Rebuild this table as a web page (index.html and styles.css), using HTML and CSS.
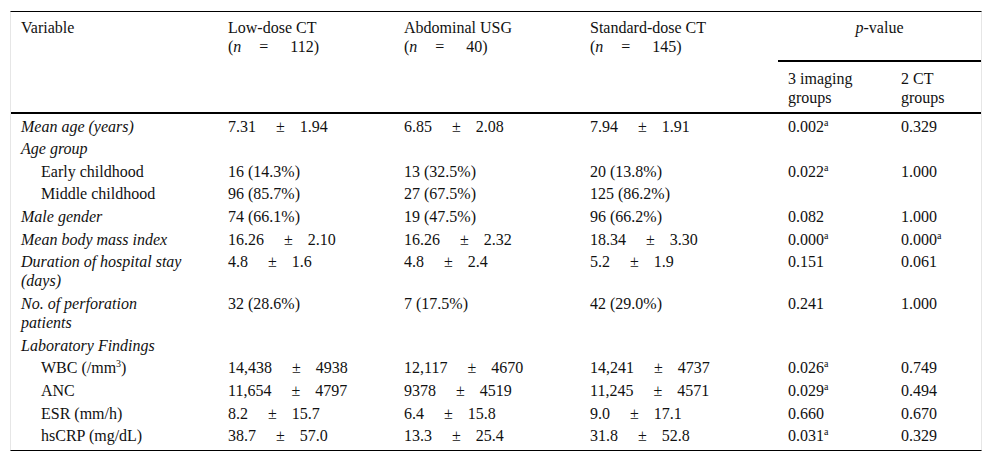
FILE: index.html
```html
<!DOCTYPE html>
<html lang="en">
<head>
<meta charset="utf-8">
<title>Table</title>
<link rel="stylesheet" href="styles.css">
</head>
<body>
<table class="tbl">
  <colgroup>
    <col class="c1"><col class="c2"><col class="c3"><col class="c4"><col class="c5"><col class="c6">
  </colgroup>
  <thead>
    <tr class="h1">
      <th rowspan="2" class="hb">Variable</th>
      <th rowspan="2" class="hb">Low-dose CT<br>(<i>n</i><span class="eq">=</span>112)</th>
      <th rowspan="2" class="hb">Abdominal USG<br>(<i>n</i><span class="eq">=</span>40)</th>
      <th rowspan="2" class="hb">Standard-dose CT<br>(<i>n</i><span class="eq">=</span>145)</th>
      <th colspan="2" class="pv"><i>p</i>-value</th>
    </tr>
    <tr class="h2">
      <th class="hb sub">3 imaging groups</th>
      <th class="hb sub">2 CT groups</th>
    </tr>
  </thead>
  <tbody>
    <tr><td><i>Mean age (years)</i></td><td>7.31<span class="pm">±</span>1.94</td><td>6.85<span class="pm">±</span>2.08</td><td>7.94<span class="pm">±</span>1.91</td><td>0.002<span class="sup">a</span></td><td>0.329</td></tr>
    <tr><td><i>Age group</i></td><td></td><td></td><td></td><td></td><td></td></tr>
    <tr><td class="ind">Early childhood</td><td>16 (14.3%)</td><td>13 (32.5%)</td><td>20 (13.8%)</td><td>0.022<span class="sup">a</span></td><td>1.000</td></tr>
    <tr><td class="ind">Middle childhood</td><td>96 (85.7%)</td><td>27 (67.5%)</td><td>125 (86.2%)</td><td></td><td></td></tr>
    <tr><td><i>Male gender</i></td><td>74 (66.1%)</td><td>19 (47.5%)</td><td>96 (66.2%)</td><td>0.082</td><td>1.000</td></tr>
    <tr><td><i>Mean body mass index</i></td><td>16.26<span class="pm">±</span>2.10</td><td>16.26<span class="pm">±</span>2.32</td><td>18.34<span class="pm">±</span>3.30</td><td>0.000<span class="sup">a</span></td><td>0.000<span class="sup">a</span></td></tr>
    <tr><td><i>Duration of hospital stay (days)</i></td><td>4.8<span class="pm">±</span>1.6</td><td>4.8<span class="pm">±</span>2.4</td><td>5.2<span class="pm">±</span>1.9</td><td>0.151</td><td>0.061</td></tr>
    <tr><td><i>No. of perforation<br>patients</i></td><td>32 (28.6%)</td><td>7 (17.5%)</td><td>42 (29.0%)</td><td>0.241</td><td>1.000</td></tr>
    <tr><td><i>Laboratory Findings</i></td><td></td><td></td><td></td><td></td><td></td></tr>
    <tr><td class="ind">WBC (/mm<span class="sup">3</span>)</td><td>14,438<span class="pm">±</span>4938</td><td>12,117<span class="pm">±</span>4670</td><td>14,241<span class="pm">±</span>4737</td><td>0.026<span class="sup">a</span></td><td>0.749</td></tr>
    <tr><td class="ind">ANC</td><td>11,654<span class="pm">±</span>4797</td><td>9378<span class="pm">±</span>4519</td><td>11,245<span class="pm">±</span>4571</td><td>0.029<span class="sup">a</span></td><td>0.494</td></tr>
    <tr><td class="ind">ESR (mm/h)</td><td>8.2<span class="pm">±</span>15.7</td><td>6.4<span class="pm">±</span>15.8</td><td>9.0<span class="pm">±</span>17.1</td><td>0.660</td><td>0.670</td></tr>
    <tr class="last"><td class="ind">hsCRP (mg/dL)</td><td>38.7<span class="pm">±</span>57.0</td><td>13.3<span class="pm">±</span>25.4</td><td>31.8<span class="pm">±</span>52.8</td><td>0.031<span class="sup">a</span></td><td>0.329</td></tr>
  </tbody>
</table>
</body>
</html>
```

FILE: styles.css
```css
html, body {
  margin: 0;
  padding: 0;
  background: #ffffff;
}

body {
  font-family: "Liberation Serif", "Times New Roman", serif;
  font-size: 16px;
  color: #111111;
}

.tbl {
  margin: 11px 0 0 10px;
  width: 972px;
  table-layout: fixed;
  border-collapse: separate;
  border-spacing: 0;
  border-top: 1px solid #000000;
  border-bottom: 1px solid #000000;
  border-left: 1px solid #e6e6e6;
  border-right: 1px solid #e6e6e6;
}

.c1 { width: 207px; }
.c2 { width: 176px; }
.c3 { width: 186px; }
.c4 { width: 198px; }
.c5 { width: 113px; }
.c6 { width: 90px; }

th {
  font-weight: normal;
  text-align: left;
  vertical-align: top;
  line-height: 19px;
  padding: 6px 10px 0 10px;
}

.h1 { height: 50px; }
.h2 { height: 52px; }

.hb { border-bottom: 2px solid #000000; }

.pv {
  text-align: center;
  border-bottom: 2px solid #000000;
}

.sub { padding-top: 7px; }

td {
  vertical-align: top;
  line-height: 19px;
  padding: 2.5px 10px 1.17px 10px;
}

td.ind { padding-left: 30px; }

.last td { padding-bottom: 5px; }

.eq { margin: 0 22px 0 18px; }

.pm { margin: 0 15px 0 20px; }

.sup {
  font-size: 10px;
  line-height: 0;
  vertical-align: 6px;
}
```
